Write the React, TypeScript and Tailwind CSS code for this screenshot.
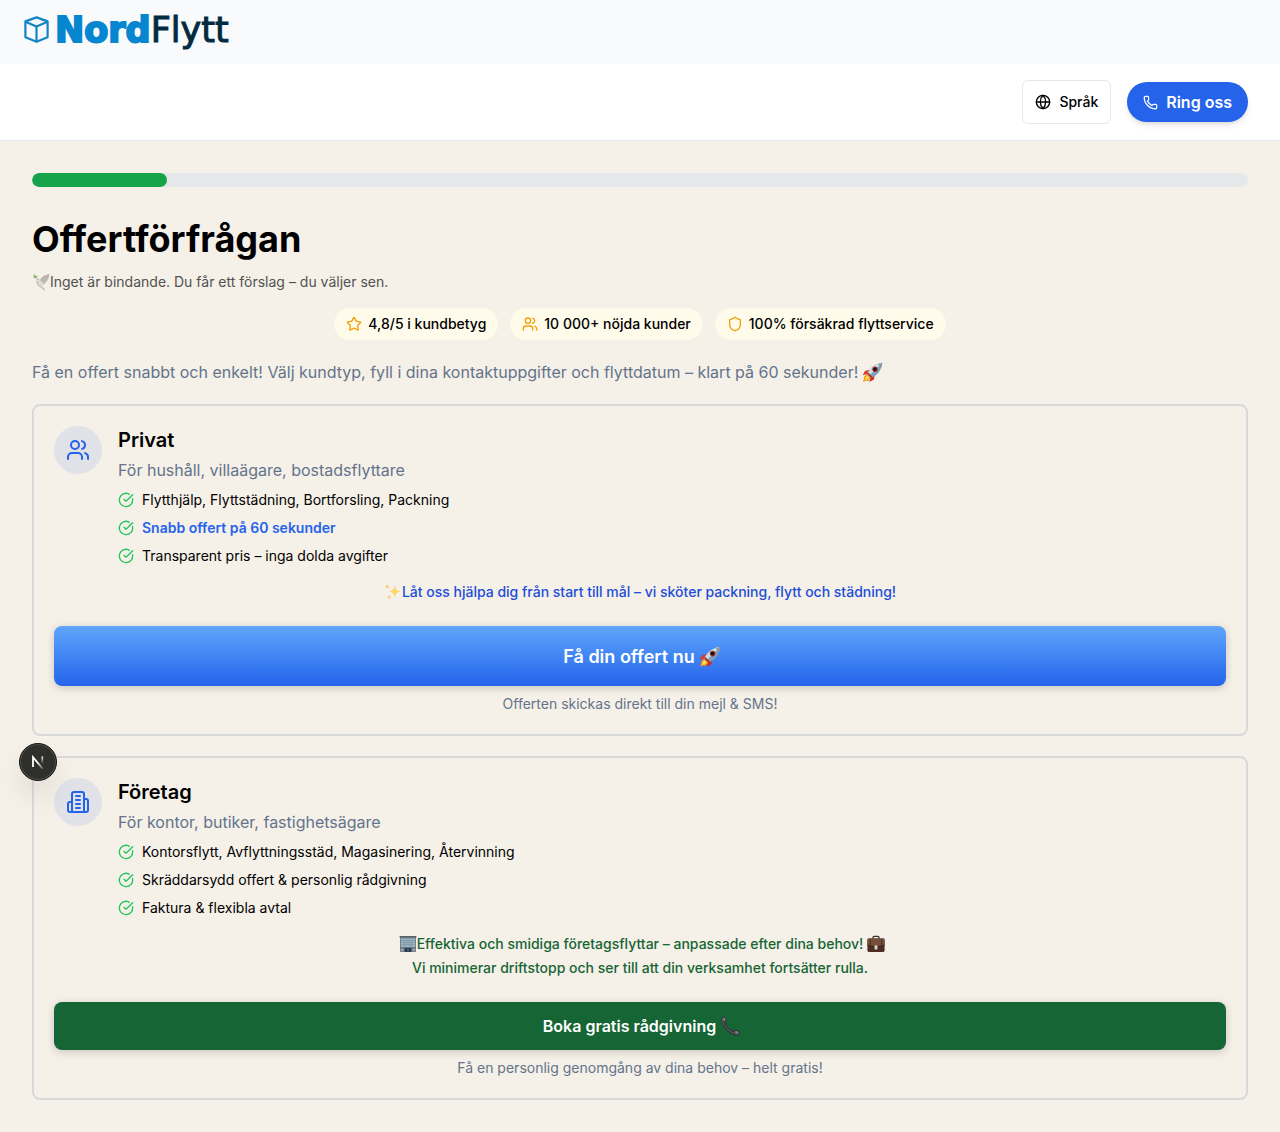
import type { ReactNode } from 'react';
import { CircleCheckBig, Globe, Phone, Shield, Star, Users } from 'lucide-react';

function Rocket({ className = '' }: { className?: string }) {
  return (
    <svg viewBox="0 0 22 22" className={className} role="img" aria-label="raket">
      <path d="M8 8 3 9.5.8 14l5-1.4z" fill="#e5391f" />
      <path d="m13.500 13.500-1.200 4.800-4.600 2.600 1.600-5.600z" fill="#d62a18" />
      <path d="M5.200 12.600 1.600 16l.9.600L.9 20.600l4.200-1.300.8 1.200 3.400-4z" fill="#f58a1f" />
      <path d="m5.400 14-2.600 2.600.8.400-1 2.600 2.700-1.300.4.800 2.300-2.800z" fill="#ffdd3d" />
      <path d="M5.200 12.400C8.200 6.500 13 2 21.200.800 20.600 8.600 16 14 9.600 16.800z" fill="#7d9fb8" />
      <path d="M5.200 12.400C8.200 6.500 13 2 21.200.800L7.400 14.600z" fill="#c9dde8" />
      <path d="M16.600 2.300 21.200.800l-.9 4.900z" fill="#8e959c" />
      <path d="m5.200 12.400 4.400 4.400 1.600-.8-5-5.200z" fill="#b02a20" />
      <circle cx="13.600" cy="7.600" r="2.800" fill="#b52a22" />
      <circle cx="13.600" cy="7.600" r="1.900" fill="#14171c" />
    </svg>
  );
}

function Dove() {
  return (
    <svg viewBox="0 0 18 18" className="size-[18px] shrink-0" role="img" aria-label="duva">
      <path d="M.4 1.600 2.600 3 2.200.800 4 3.200l1.600-.6-.8 2L3 5.200 1 4.800l1.200-.8z" fill="#86b26c" />
      <path d="M3.400 4.400 5.600 6" stroke="#8a9a6a" strokeWidth=".7" />
      <path d="M7.600 7.800C9.600 3.600 13 1.600 17.400 1c-.2 4.800-2.400 8.600-5.800 10.800z" fill="#c3bfb9" />
      <path d="M9.200 8.800C11 5.200 13.600 3 17 1.600M10.400 9.800c2.600-2.200 4.200-4.600 5.600-6.600M8.200 8C9 6 10.600 4.200 12.600 3" stroke="#96918b" strokeWidth=".5" fill="none" />
      <path d="M5 5.600c1.400-1 2.800 0 3.400 1.600l3.400 3.800-1.200 2.200 3.200 3-1.600 1.200-4-3.600C5.400 13.200 4.200 10.400 4.600 7.600L3.800 6.800z" fill="#dedbd6" />
      <path d="M4.800 8c.2 3 1.600 5.200 3.800 5.800l4 3.400" stroke="#aaa59e" strokeWidth=".8" fill="none" />
      <circle cx="6" cy="6.600" r=".4" fill="#333" />
    </svg>
  );
}

function Sparkles() {
  return (
    <svg viewBox="0 0 18 18" className="size-[18px] shrink-0" role="img" aria-label="gnistor">
      <path d="M10.800 2.200c.7 4 1.900 5.400 5.800 6.200-3.900.8-5.100 2.200-5.800 6.200-.7-4-1.900-5.400-5.800-6.200 3.900-.8 5.100-2.200 5.800-6.200z" fill="#ffd766" />
      <path d="M3.200.800c.3 1.900.9 2.500 2.600 2.900-1.700.4-2.300 1-2.600 2.900C2.900 4.700 2.300 4.100.6 3.700 2.300 3.300 2.900 2.700 3.200.8zM5.200 11.600c.3 1.700.8 2.300 2.400 2.600-1.600.3-2.100.9-2.400 2.600-.3-1.700-.8-2.300-2.400-2.600 1.600-.3 2.100-.9 2.400-2.600z" fill="#fbcf70" />
    </svg>
  );
}

function Office() {
  return (
    <svg viewBox="0 0 18 18" className="size-[18px] shrink-0" role="img" aria-label="kontor">
      <path d="M1 2h16v15H1z" fill="#78838d" />
      <path d="M.6 1h16.800v1.600H.6z" fill="#59636c" />
      <path d="M2.200 3.400h13.600V12H2.200z" fill="#9fc0d4" />
      <path d="M2.200 5.400h13.600M2.200 7.600h13.600M2.200 9.800h13.600M4.900 3v9M7.600 3v9M10.300 3v9M13 3v9" stroke="#7d8b96" strokeWidth=".7" />
      <path d="M1 12h16v1.200H1z" fill="#6a737b" />
      <path d="M5.600 13h6.800v4H5.600z" fill="#26384a" />
      <path d="M9 13v4" stroke="#6f9ab8" strokeWidth=".6" />
      <path d="M2.200 13.800h2.200V16H2.200zM13.600 13.800h2.200V16h-2.200z" fill="#8fa4b2" />
    </svg>
  );
}

function Briefcase() {
  return (
    <svg viewBox="0 0 18 18" className="size-[18px] shrink-0" role="img" aria-label="portfölj">
      <path d="M6 4.400V2.600Q6 1.400 7.200 1.400h3.600Q12 1.400 12 2.600v1.800" fill="none" stroke="#41302a" strokeWidth="1.300" />
      <rect x=".4" y="3.600" width="17.200" height="13.400" rx="1.400" fill="#4b2d23" />
      <path d="M1.800 3.600h14.400q1.400 0 1.400 1.400v5L9 12 .4 10V5q0-1.400 1.400-1.400z" fill="#76503d" />
      <path d="M.4 10 9 12l8.600-2" fill="none" stroke="#2f1c16" strokeWidth=".7" />
      <path d="M3.400 4v6M14.600 4v6" stroke="#4e3025" />
      <rect x="7.600" y="10.600" width="2.800" height="4" rx=".6" fill="#e6e2dc" />
      <path d="M8.400 13h1.200" stroke="#77706a" strokeWidth=".6" />
    </svg>
  );
}

function Receiver() {
  return (
    <svg viewBox="0 0 21 21" className="size-[21px] shrink-0" role="img" aria-label="telefonlur">
      <path d="M1 2.400C2 .8 4.200.2 5.400 1.200l1.400 3.200c.2 1.200-1.400 1.800-1.200 3 1.200 3.200 4 6 7.200 7.400 1.200.4 1.800-1.600 3-1.400l3.600 1.600c1.200 1.400.4 3.600-1.400 4.600C11.600 21.400.2 9.800 1 2.400z" fill="#34363a" />
      <path d="M2.200 3.200c1.200 6.800 6.800 13 14.600 15" fill="none" stroke="#686b70" strokeWidth=".9" />
      <path d="M2.200 2.400c.8-.8 1.800-1 2.600-.6l1 2.400-1.600 1.400zM15.800 14.600l2.800 1.400c.2 1-.2 1.800-1 2.600l-3-2.400z" fill="#777a7f" />
    </svg>
  );
}

function Building() {
  return (
    <svg viewBox="0 0 24 24" className="size-6" fill="none" stroke="currentColor" strokeWidth="2" strokeLinecap="round" strokeLinejoin="round" aria-hidden="true">
      <path d="M6 22V4a2 2 0 0 1 2-2h8a2 2 0 0 1 2 2v18Z" />
      <path d="M6 12H4a2 2 0 0 0-2 2v6a2 2 0 0 0 2 2h2" />
      <path d="M18 9h2a2 2 0 0 1 2 2v9a2 2 0 0 1-2 2h-2" />
      <path d="M10 6h4M10 10h4M10 14h4M10 18h4" />
    </svg>
  );
}

function Logo() {
  return (
    <a href="#" aria-label="NordFlytt" className="flex items-center gap-1.5 pb-1">
      <svg viewBox="0 0 25 28" className="h-7 w-[25px]" fill="none" stroke="#1484c7" strokeWidth="2.200" strokeLinejoin="round" aria-hidden="true">
        <path d="M12.500 1.400 23.600 5.400v15.800l-11.100 4.600-11.100-4.600V5.400z" />
        <path d="m1.400 5.800 11.100 4.600 11.100-4.600" />
        <path d="M12.500 10.400v15" />
      </svg>
      <span className="font-['DejaVu_Sans',sans-serif] text-[35px] leading-9 text-[#022b41]">
        <span className="font-bold text-[#0586cf] [-webkit-text-stroke:2px_#0586cf]">Nord</span>
        <span className="[-webkit-text-stroke:1px_#022b41]">Flytt</span>
      </span>
    </a>
  );
}

function Chip({ icon, children }: { icon: ReactNode; children: ReactNode }) {
  return (
    <li className="flex items-center gap-1.5 rounded-full bg-amber-50 px-3 py-1.5 text-sm font-medium text-black">
      <span className="text-[#f59e0b]">{icon}</span>
      {children}
    </li>
  );
}

interface CardProps {
  icon: ReactNode;
  title: string;
  description: string;
  items: { text: string; strong?: boolean }[];
  promo: ReactNode;
  button: ReactNode;
  note: string;
}

function OfferCard({ icon, title, description, items, promo, button, note }: CardProps) {
  return (
    <section className="rounded-lg border-2 border-[#d9d9d9] p-5">
      <div className="flex items-start gap-4">
        <div className="flex size-12 shrink-0 items-center justify-center rounded-full bg-[#e1e2e8] text-[#2563eb]">{icon}</div>
        <div>
          <h2 className="text-xl font-semibold text-black">{title}</h2>
          <p className="mt-1 text-base text-[#64748b]">{description}</p>
          <ul className="mt-2 flex flex-col gap-2 text-sm">
            {items.map((item) => (
              <li key={item.text} className="flex items-center gap-2">
                <CircleCheckBig className="size-4 shrink-0 text-[#22c55e]" />
                <span className={item.strong ? 'font-semibold text-[#2563eb]' : 'text-black'}>{item.text}</span>
              </li>
            ))}
          </ul>
        </div>
      </div>
      <div className="mt-3.5 mb-[22px] text-center text-sm leading-6 font-medium">{promo}</div>
      {button}
      <p className="mt-2 text-center text-sm text-[#64748b]">{note}</p>
    </section>
  );
}

export default function App() {
  return (
    <div className="relative min-h-screen bg-[#f5f0e8] font-['Inter',sans-serif] text-black">
      <header>
        <div className="flex h-16 items-center bg-slate-50 px-6">
          <Logo />
        </div>
        <nav className="flex items-center justify-end gap-4 border-b border-slate-200 bg-white px-8 py-4">
          <button type="button" className="flex h-11 items-center gap-2 rounded-md border border-slate-200 bg-white px-3 text-sm font-medium">
            <Globe className="size-4" />
            Språk
          </button>
          <a href="tel:" className="flex h-10 items-center gap-2 rounded-full bg-[#2563eb] px-4 text-base font-semibold text-white shadow-md">
            <Phone className="size-[15px]" />
            Ring oss
          </a>
        </nav>
      </header>

      <main className="p-8">
        <div role="progressbar" aria-label="Förlopp" aria-valuenow={11} aria-valuemin={0} aria-valuemax={100} className="h-3.5 overflow-hidden rounded-full bg-gray-200">
          <div className="h-full w-1/9 rounded-full bg-[#16a34a]" />
        </div>

        <h1 className="mt-8 text-4xl font-bold">Offertförfrågan</h1>
        <p className="mt-[13px] flex items-center text-sm text-neutral-600">
          <Dove />
          Inget är bindande. Du får ett förslag – du väljer sen.
        </p>

        <ul className="mt-4 flex flex-wrap justify-center gap-3">
          <Chip icon={<Star className="size-4" />}>4,8/5 i kundbetyg</Chip>
          <Chip icon={<Users className="size-4" />}>10 000+ nöjda kunder</Chip>
          <Chip icon={<Shield className="size-4" />}>100% försäkrad flyttservice</Chip>
        </ul>

        <p className="mt-5 flex items-center gap-1 text-base text-[#64748b]">
          Få en offert snabbt och enkelt! Välj kundtyp, fyll i dina kontaktuppgifter och flyttdatum – klart på 60 sekunder!
          <Rocket className="size-[21px] shrink-0" />
        </p>

        <div className="mt-5 flex flex-col gap-5">
          <OfferCard
            icon={<Users className="size-6" />}
            title="Privat"
            description="För hushåll, villaägare, bostadsflyttare"
            items={[
              { text: 'Flytthjälp, Flyttstädning, Bortforsling, Packning' },
              { text: 'Snabb offert på 60 sekunder', strong: true },
              { text: 'Transparent pris – inga dolda avgifter' },
            ]}
            promo={
              <p className="flex items-center justify-center text-[#1d4ed8]">
                <Sparkles />
                Låt oss hjälpa dig från start till mål – vi sköter packning, flytt och städning!
              </p>
            }
            button={
              <button type="button" className="flex h-15 w-full items-center justify-center gap-1 rounded-lg bg-linear-to-b from-[#60a5fa] to-[#2563eb] pt-0.5 pl-1 text-lg font-semibold text-white shadow-[0_2px_8px_rgba(0,0,0,0.18)]">
                Få din offert nu
                <Rocket className="size-[22px] shrink-0" />
              </button>
            }
            note="Offerten skickas direkt till din mejl & SMS!"
          />
          <OfferCard
            icon={<Building />}
            title="Företag"
            description="För kontor, butiker, fastighetsägare"
            items={[
              { text: 'Kontorsflytt, Avflyttningsstäd, Magasinering, Återvinning' },
              { text: 'Skräddarsydd offert & personlig rådgivning' },
              { text: 'Faktura & flexibla avtal' },
            ]}
            promo={
              <div className="text-[#166534]">
                <p className="flex items-center justify-center pl-1">
                  <Office />
                  <span className="mr-1">Effektiva och smidiga företagsflyttar – anpassade efter dina behov!</span>
                  <Briefcase />
                </p>
                <p>Vi minimerar driftstopp och ser till att din verksamhet fortsätter rulla.</p>
              </div>
            }
            button={
              <button type="button" className="flex h-12 w-full items-center justify-center gap-1 rounded-lg bg-[#166534] pl-1 text-base font-semibold text-white shadow-[0_2px_8px_rgba(0,0,0,0.18)]">
                Boka gratis rådgivning
                <Receiver />
              </button>
            }
            note="Få en personlig genomgång av dina behov – helt gratis!"
          />
        </div>
      </main>

      <button type="button" aria-label="Next.js" className="absolute top-[743px] left-[19px] flex size-[38px] items-center justify-center rounded-full border border-[#171717] bg-[#2f2f2c] shadow-[inset_0_0_0_1px_#51514f,0_16px_32px_-8px_rgba(0,0,0,0.24)]">
        <svg viewBox="0 0 14 14" className="size-3.5" fill="none" aria-hidden="true">
          <defs>
            <linearGradient id="next-diagonal" x1="7" y1="7" x2="13" y2="14" gradientUnits="userSpaceOnUse">
              <stop stopColor="#fff" />
              <stop offset="1" stopColor="#fff" stopOpacity="0.100" />
            </linearGradient>
            <linearGradient id="next-stem" x1="11" y1="1" x2="11" y2="9" gradientUnits="userSpaceOnUse">
              <stop stopColor="#fff" />
              <stop offset="1" stopColor="#fff" stopOpacity="0" />
            </linearGradient>
          </defs>
          <path d="M2 12V2.200L12 14" stroke="url(#next-diagonal)" strokeWidth="1.800" />
          <path d="M11.300 1.500V10" stroke="url(#next-stem)" strokeWidth="1.700" />
        </svg>
      </button>
    </div>
  );
}
